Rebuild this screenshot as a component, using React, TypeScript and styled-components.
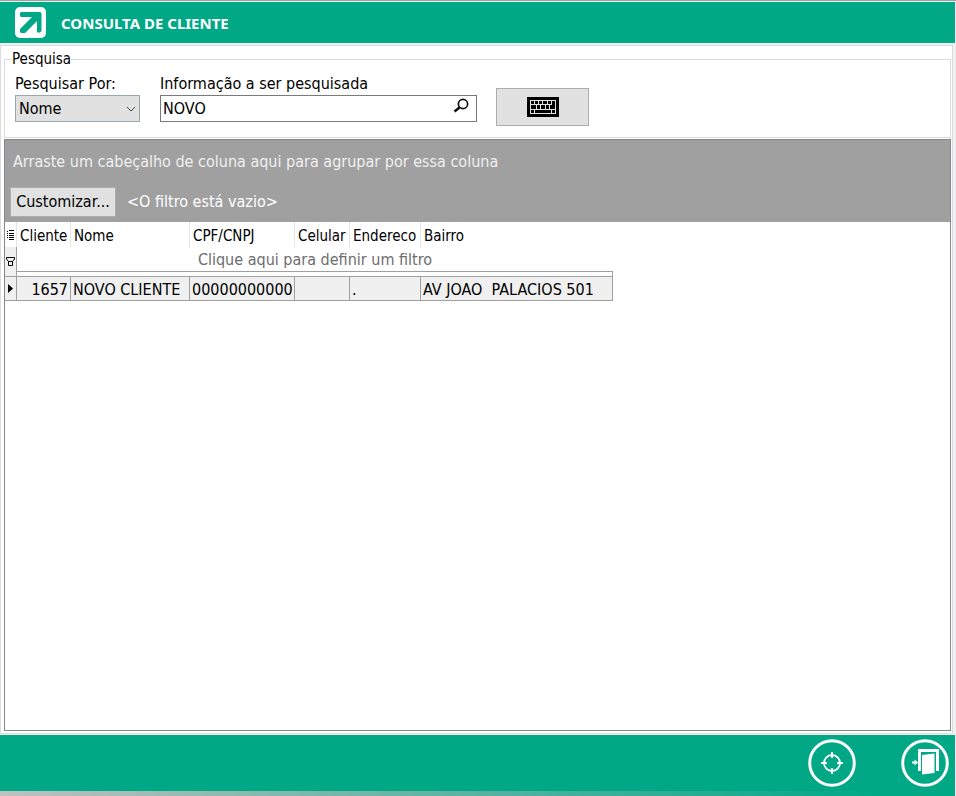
import React, { useState } from 'react';
import styled, { createGlobalStyle, css } from 'styled-components';

const GREEN = '#00a886';
const LINE = '#dcdcdc';
const GRID = '#a0a0a0';

const GlobalStyle = createGlobalStyle`
  *, *::before, *::after { box-sizing: border-box; }
  body { margin: 0; }
  body, button, input, select {
    font-family: 'DejaVu Sans Condensed', 'Noto Sans', sans-serif;
    font-size: 16px;
    line-height: 20px;
    color: #000;
  }
`;

const Page = styled.div`
  display: flex;
  flex-direction: column;
  min-height: 100vh;
  padding-right: 1px;
  background: #f0f0f0;
  border-top: 1px solid #a0a0a0;
`;

const Header = styled.header`
  display: flex;
  align-items: center;
  gap: 15px;
  height: 42px;
  padding-left: 15px;
  background: ${GREEN};
  border-top: 1px solid #e6f4f1;
`;

const Title = styled.h1`
  margin: 0;
  font: 700 15px/20px 'Noto Sans', sans-serif;
  color: #fff;
`;

const Panel = styled.main`
  flex: 1;
  display: flex;
  flex-direction: column;
  gap: 1px;
  margin: 2px 2px 1px 0;
  padding: 3px 1px 2px 3px;
  background: #fff;
  border: 1px solid ${LINE};
`;

const Search = styled.fieldset`
  display: flex;
  align-items: flex-start;
  min-width: 0;
  height: 89px;
  margin: 0;
  padding: 4px 10px 0;
  border: 1px solid ${LINE};
`;

const Legend = styled.legend`
  margin-left: -3px;
  padding: 0;
  font-size: 15px;
`;

const Field = styled.div<{ $width: number; $gap: number }>`
  display: flex;
  flex-direction: column;
  gap: 1px;
  padding-top: 1px;
  width: ${p => p.$width}px;
  margin-right: ${p => p.$gap}px;
`;

const Label = styled.label`
  white-space: nowrap;
`;

const Control = styled.div`
  display: grid;
  align-items: center;
  & > * { grid-area: 1 / 1; }
  & > svg { justify-self: end; pointer-events: none; }
`;

const Select = styled.select`
  appearance: none;
  width: 100%;
  height: 27px;
  padding: 1px 3px 0;
  background: #e1e1e1;
  border: 1px solid #9aa7b0;
  border-radius: 0;
`;

const Input = styled.input`
  width: 100%;
  height: 27px;
  padding: 0 26px 0 2px;
  background: #fff;
  border: 1px solid #7a7a7a;
  border-radius: 0;
`;

const Button = styled.button`
  display: flex;
  align-items: center;
  justify-content: center;
  padding: 0 5px;
  background: #e1e1e1;
  border: 1px solid #adadad;
`;

const KeyboardButton = styled(Button)`
  width: 93px;
  height: 38px;
  margin-top: 15px;
`;

const Grid = styled.section`
  flex: 1;
  border: 1px solid #828790;
`;

const GroupArea = styled.div`
  display: flex;
  flex-direction: column;
  gap: 15px;
  padding: 12px 5px 5px;
  color: #fff;
  background: #a0a0a0;
`;

const GroupHint = styled.p`
  margin: 0 3px;
  color: #f0f0f0;
`;

const FilterBar = styled.div`
  display: flex;
  align-items: center;
  gap: 11px;
`;

const CustomizeButton = styled(Button)`
  width: 106px;
  height: 30px;
`;

const Table = styled.table`
  table-layout: fixed;
  width: 608px;
  border-collapse: separate;
  border-spacing: 0;
  white-space: pre;
`;

const Col = styled.col<{ $width: number }>`
  width: ${p => p.$width}px;
`;

const HeadCell = styled.th`
  height: 25px;
  padding: 2px 0 0 3px;
  font-size: 15px;
  font-weight: 400;
  text-align: left;
  border-right: 1px solid #e5e5e5;
  &:last-child { border-right-color: transparent; }
`;

const indicator = css`
  padding: 0;
  text-align: center;
  line-height: 0;
  & > svg { display: block; margin: 0 auto; }
`;

const HeadIndicator = styled(HeadCell)`
  ${indicator}
`;

const Indicator = styled.td`
  ${indicator}
  background: #f0f0f0;
  border-right: 1px solid ${GRID};
`;

const RowIndicator = styled(Indicator)`
  border-top: 1px solid ${GRID};
  border-bottom: 1px solid ${GRID};
`;

const FilterCell = styled.td`
  height: 25px;
  padding: 2px 0 0;
  text-align: center;
  color: #6d6d6d;
  border-bottom: 1px solid ${GRID};
`;

const GapCell = styled.td`
  height: 4px;
  padding: 0;
  border-right: 1px solid ${GRID};
`;

const Cell = styled.td<{ $right?: boolean }>`
  height: 25px;
  padding: 2px 2px 0;
  text-align: ${p => (p.$right ? 'right' : 'left')};
  background: #f0f0f0;
  border: solid ${GRID};
  border-width: 1px 1px 1px 0;
`;

const Footer = styled.footer`
  display: flex;
  justify-content: flex-end;
  align-items: flex-start;
  gap: 45px;
  height: 61px;
  padding: 4px 6px 0 0;
  background: linear-gradient(90deg, #c0c0c0, ${GREEN} 92%) bottom / 100% 5px no-repeat ${GREEN};
`;

const RoundButton = styled.button`
  display: block;
  padding: 0;
  line-height: 0;
  background: none;
  border: 0;
  border-radius: 50%;
`;

const Logo = () => (
  <svg width="31" height="31" viewBox="0 0 31 31" aria-hidden="true">
    <rect width="31" height="31" rx="5" fill="#fff" />
    <path
      d="M6 5H25Q26.5 5 26.5 7V24L25 25.5H22V14L10 26H6L5 25V22L17 10H6L5 9V6Z"
      fill={GREEN}
    />
  </svg>
);

const Chevron = () => (
  <svg width="18" height="10" viewBox="0 0 18 10" aria-hidden="true">
    <path d="M5 3L9 7L13 3" fill="none" stroke="#444" />
  </svg>
);

const Magnifier = () => (
  <svg width="25" height="24" viewBox="0 0 25 24" aria-hidden="true">
    <circle cx="11" cy="7" r="4.6" fill="none" stroke="#111" strokeWidth="1.7" />
    <path d="M7.5 10.5L2.5 14.5" stroke="#111" strokeWidth="2.6" />
  </svg>
);

const Keyboard = () => (
  <svg width="32" height="20" viewBox="0 0 32 20" shapeRendering="crispEdges" aria-hidden="true">
    <path d="M0 0H32V20H0Z" />
    <path
      d="M3.5 3.5H28.5V16.5H3.5ZM3 7.5H25M3 12.5H29M7.5 4V8M11.5 4V8M15.5 4V8M20.5 4V8M24.5 4V8M9.5 8V12M13.5 8V12M18.5 8V12M22.5 8V12M7.5 13V16M24.5 13V16"
      fill="none"
      stroke="#e1e1e1"
    />
  </svg>
);

const ListIcon = () => (
  <svg width="7" height="10" viewBox="0 0 7 10" shapeRendering="crispEdges" aria-hidden="true">
    <path
      d="M2 .5H7M2 3.5H7M2 5.5H7M2 7.5H7M2 9.5H7M0 1.5H1M0 3.5H1M0 5.5H1M0 7.5H1"
      stroke="#000"
    />
  </svg>
);

const FunnelIcon = () => (
  <svg width="9" height="9" viewBox="0 0 9 9" aria-hidden="true">
    <path d="M.5 .5H8.5V2L6.5 4.5V8.5H2.5V4.5L.5 2ZM2.5 4.5H6.5" fill="none" stroke="#000" />
  </svg>
);

const RowArrow = () => (
  <svg width="5" height="9" viewBox="0 0 5 9" aria-hidden="true">
    <path d="M0 0L5 4.5L0 9Z" />
  </svg>
);

const TargetIcon = () => (
  <svg width="48" height="48" viewBox="0 0 48 48" fill="none" stroke="#fff" aria-hidden="true">
    <circle cx="24" cy="24" r="22.3" strokeWidth="3" />
    <circle cx="24" cy="24" r="8" strokeWidth="1.8" />
    <path d="M24 13V19M24 29V35M13 24H19M29 24H35" strokeWidth="2" />
  </svg>
);

const ExitIcon = () => (
  <svg width="48" height="48" viewBox="0 0 48 48" aria-hidden="true">
    <circle cx="24" cy="24" r="22.3" fill="none" stroke="#fff" strokeWidth="3" />
    <path d="M18.5 32V11.5H36.5V32" fill="none" stroke="#fff" strokeWidth="3" />
    <path d="M21 16L33.5 14.5V34L21 35.5Z" fill="#fff" />
    <path d="M11 23.5H15" fill="none" stroke="#fff" strokeWidth="2" />
    <path d="M13.5 20.5L17 23.5L13.5 26.5Z" fill="#fff" />
  </svg>
);

const columns = [
  { name: 'Cliente', width: 54 },
  { name: 'Nome', width: 119 },
  { name: 'CPF/CNPJ', width: 105 },
  { name: 'Celular', width: 55 },
  { name: 'Endereco', width: 71 },
  { name: 'Bairro', width: 192 },
];

const rows = [['1657', 'NOVO CLIENTE', '00000000000', '', '.', 'AV JOAO  PALACIOS 501']];

export default function App() {
  const [term, setTerm] = useState('NOVO');
  return (
    <>
      <GlobalStyle />
      <Page>
        <Header>
          <Logo />
          <Title>CONSULTA DE CLIENTE</Title>
        </Header>
        <Panel>
          <Search>
            <Legend>Pesquisa</Legend>
            <Field $width={125} $gap={20}>
              <Label htmlFor="by">Pesquisar Por:</Label>
              <Control>
                <Select id="by">
                  <option>Nome</option>
                </Select>
                <Chevron />
              </Control>
            </Field>
            <Field $width={317} $gap={19}>
              <Label htmlFor="term">Informação a ser pesquisada</Label>
              <Control>
                <Input id="term" value={term} onChange={e => setTerm(e.target.value)} />
                <Magnifier />
              </Control>
            </Field>
            <KeyboardButton type="button" aria-label="Teclado">
              <Keyboard />
            </KeyboardButton>
          </Search>
          <Grid>
            <GroupArea>
              <GroupHint>Arraste um cabeçalho de coluna aqui para agrupar por essa coluna</GroupHint>
              <FilterBar>
                <CustomizeButton type="button">Customizar...</CustomizeButton>
                <span>&lt;O filtro está vazio&gt;</span>
              </FilterBar>
            </GroupArea>
            <Table>
              <colgroup>
                <Col $width={12} />
                {columns.map(c => (
                  <Col key={c.name} $width={c.width} />
                ))}
              </colgroup>
              <thead>
                <tr>
                  <HeadIndicator>
                    <ListIcon />
                  </HeadIndicator>
                  {columns.map(c => (
                    <HeadCell key={c.name} scope="col">
                      {c.name}
                    </HeadCell>
                  ))}
                </tr>
              </thead>
              <tbody>
                <tr>
                  <Indicator rowSpan={2}>
                    <FunnelIcon />
                  </Indicator>
                  <FilterCell colSpan={6}>Clique aqui para definir um filtro</FilterCell>
                </tr>
                <tr>
                  <GapCell colSpan={6} />
                </tr>
                {rows.map(row => (
                  <tr key={row[0]}>
                    <RowIndicator>
                      <RowArrow />
                    </RowIndicator>
                    {row.map((value, i) => (
                      <Cell key={columns[i].name} $right={i === 0}>
                        {value}
                      </Cell>
                    ))}
                  </tr>
                ))}
              </tbody>
            </Table>
          </Grid>
        </Panel>
        <Footer>
          <RoundButton type="button" aria-label="Selecionar">
            <TargetIcon />
          </RoundButton>
          <RoundButton type="button" aria-label="Sair">
            <ExitIcon />
          </RoundButton>
        </Footer>
      </Page>
    </>
  );
}
